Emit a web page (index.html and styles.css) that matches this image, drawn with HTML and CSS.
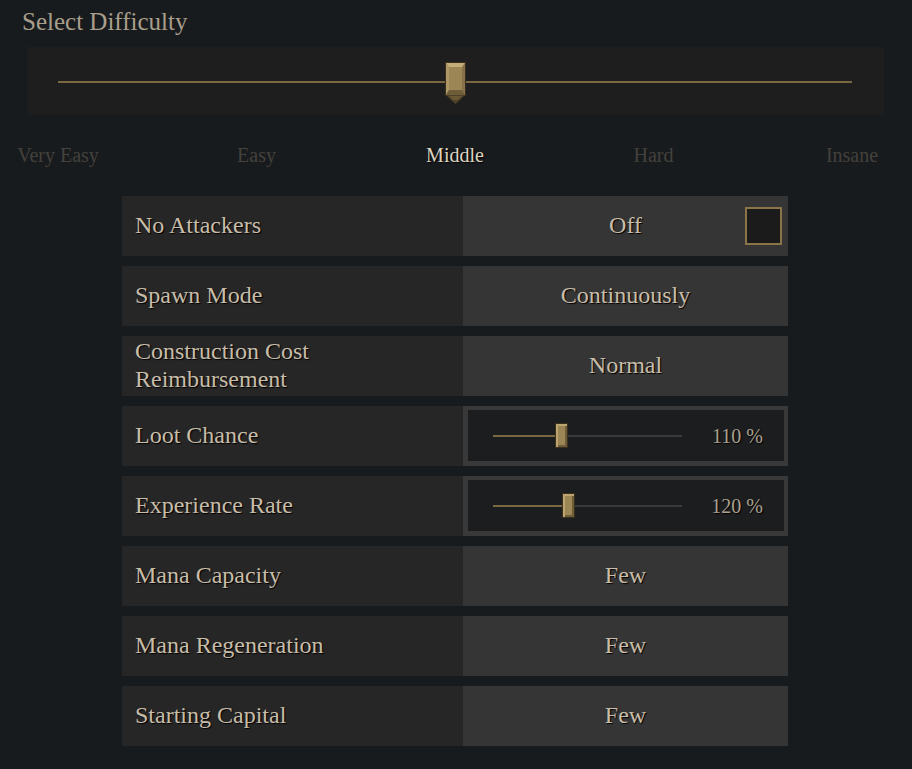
FILE: index.html
```html
<!DOCTYPE html>
<html>
<head>
    <title>Select Difficulty</title>
    <link rel="stylesheet" href="styles.css">
</head>
<body>
    <h1 class="title">Select Difficulty</h1>

    <div class="difficulty">
        <div class="track">
            <div class="handle" style="left: 50%">
                <svg width="21" height="43" viewBox="0 0 21 43">
                    <rect x="0" y="0" width="21" height="34" fill="#3a2f1c"/>
                    <rect x="1" y="1" width="19" height="32" fill="#9c8656"/>
                    <polygon points="1,1 20,1 17,5 4,5" fill="#c4ad78"/>
                    <polygon points="1,1 4,5 4,28 1,33" fill="#ae9766"/>
                    <polygon points="20,1 17,5 17,28 20,33" fill="#86714a"/>
                    <polygon points="1,33 4,28 17,28 20,33" fill="#6f5c38"/>
                    <polygon points="1,33 20,33 15,38 10.5,42 6,38" fill="#4e412a"/>
                    <polygon points="4,34 17,34 13,38 8,38" fill="#6a5834"/>
                </svg>
            </div>
        </div>
    </div>

    <div class="ticks">
        <span class="tick">Very Easy</span>
        <span class="tick">Easy</span>
        <span class="tick active">Middle</span>
        <span class="tick">Hard</span>
        <span class="tick">Insane</span>
    </div>

    <div class="options">
        <div class="option">
            <div class="label">No Attackers</div>
            <div class="value">
                Off
                <span class="checkbox"></span>
            </div>
        </div>
        <div class="option">
            <div class="label">Spawn Mode</div>
            <div class="value">Continuously</div>
        </div>
        <div class="option">
            <div class="label">Construction Cost<br>Reimbursement</div>
            <div class="value">Normal</div>
        </div>
        <div class="option">
            <div class="label">Loot Chance</div>
            <div class="value slider">
                <div class="mini-track">
                    <div class="mini-fill" style="width: 36%"></div>
                    <div class="mini-handle" style="left: 36%"></div>
                </div>
                <span class="percent">110 %</span>
            </div>
        </div>
        <div class="option">
            <div class="label">Experience Rate</div>
            <div class="value slider">
                <div class="mini-track">
                    <div class="mini-fill" style="width: 39.5%"></div>
                    <div class="mini-handle" style="left: 39.5%"></div>
                </div>
                <span class="percent">120 %</span>
            </div>
        </div>
        <div class="option">
            <div class="label">Mana Capacity</div>
            <div class="value">Few</div>
        </div>
        <div class="option">
            <div class="label">Mana Regeneration</div>
            <div class="value">Few</div>
        </div>
        <div class="option">
            <div class="label">Starting Capital</div>
            <div class="value">Few</div>
        </div>
    </div>
</body>
</html>
```

FILE: styles.css
```css
body {
    margin: 0;
    background: #181b1e;
    font-family: "Liberation Serif", serif;
    color: #c8bda9;
    height: 769px;
    overflow: hidden;
}
.title {
    margin: 9px 0 0 22px;
    font-size: 25px;
    line-height: 25px;
    font-weight: normal;
    color: #a99e8c;
}
.difficulty {
    margin: 13px 28px 0 27px;
    height: 68px;
    background: #1e1e1f;
    padding: 0 32px 0 31px;
    display: flex;
    align-items: center;
}
.track {
    position: relative;
    flex: 1;
    height: 2px;
    margin-top: 2px;
    background: #7a6842;
}
.handle {
    position: absolute;
    top: -19px;
    margin-left: -10px;
    width: 21px;
    height: 43px;
}
.handle svg {
    display: block;
}
.ticks {
    display: flex;
    justify-content: space-between;
    margin: 29px 60px 0 58px;
    height: 22px;
    line-height: 22px;
    font-size: 20px;
}
.tick {
    width: 0;
    display: flex;
    justify-content: center;
    white-space: nowrap;
    color: #44413c;
}
.tick.active {
    color: #ddd4c0;
    text-shadow: 1px 1px 1px #000;
}
.options {
    margin: 30px 0 0 122px;
    width: 666px;
    display: flex;
    flex-direction: column;
    gap: 10px;
}
.option {
    display: grid;
    grid-template-columns: 341px 325px;
    height: 60px;
    font-size: 24px;
    line-height: 28px;
    text-shadow: 1px 1px 1px #000;
}
.label {
    background: #262626;
    padding: 0 0 3px 13px;
    display: flex;
    align-items: center;
}
.value {
    position: relative;
    background: #353535;
    padding-bottom: 3px;
    display: flex;
    align-items: center;
    justify-content: center;
}
.checkbox {
    position: absolute;
    right: 6px;
    top: 11px;
    width: 33px;
    height: 34px;
    border: 2px solid #8b7448;
    background: #1b1b1b;
}
.value.slider {
    box-sizing: border-box;
    border: 4px solid #393939;
    border-left-width: 5px;
    border-bottom-width: 5px;
    background: #1c1d1e;
    justify-content: flex-start;
    padding: 0 21px 0 25px;
}
.mini-track {
    position: relative;
    width: 189px;
    height: 2px;
    background: #3a3a3a;
}
.mini-fill {
    height: 2px;
    background: #7a6842;
}
.mini-handle {
    position: absolute;
    top: -12px;
    margin-left: -6px;
    width: 11px;
    height: 23px;
    background: #9c8656;
    border: 1px solid #3a2f1c;
    box-shadow: inset 2px 2px 0 #bca571, inset -2px -2px 0 #6f5c38;
}
.percent {
    margin-left: auto;
    font-size: 20px;
    color: #aaa08f;
}
```
